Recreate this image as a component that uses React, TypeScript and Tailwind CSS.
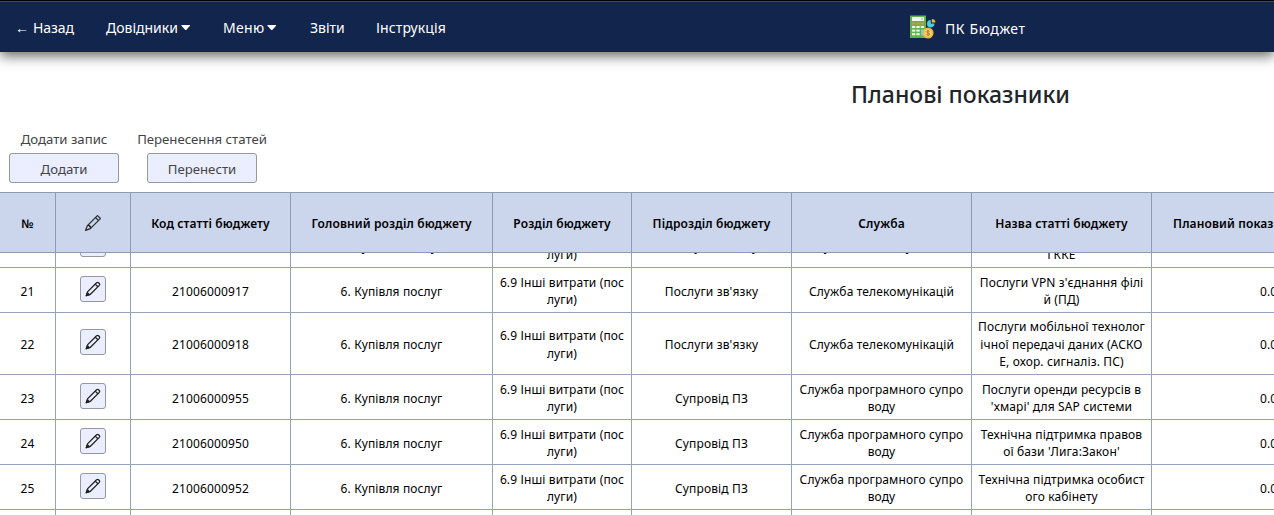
import type { ReactNode } from "react";

const COLS = "grid w-[1352px] shrink-0 grid-cols-[56px_75px_160px_202px_139px_160px_180px_180px_200px]";

function OutlinePencil() {
  return (
    <svg viewBox="0 0 16 16" className="size-4 text-[#222]" fill="currentColor" stroke="currentColor" strokeWidth="0.2" aria-hidden="true">
      <path d="M12.146.146a.5.5 0 0 1 .708 0l3 3a.5.5 0 0 1 0 .708l-10 10a.5.5 0 0 1-.168.11l-5 2a.5.5 0 0 1-.65-.65l2-5a.5.5 0 0 1 .11-.168zM11.207 2.5 13.5 4.793 14.793 3.5 12.5 1.207zm1.586 3L10.5 3.207 4 9.707V10h.5a.5.5 0 0 1 .5.5v.5h.5a.5.5 0 0 1 .5.5v.5h.293zm-9.761 5.175-.106.106-1.528 3.821 3.821-1.528.106-.106A.5.5 0 0 1 5 12.5V12h-.5a.5.5 0 0 1-.5-.5V11h-.5a.5.5 0 0 1-.468-.325" />
    </svg>
  );
}

function BoldPencil() {
  return (
    <svg viewBox="0 0 16 16" className="size-4 text-[#222]" fill="none" stroke="currentColor" strokeWidth="1.3" strokeLinejoin="round" aria-hidden="true">
      <path d="M1.300 14.700 2.700 10.600 11.600 1.700Q12.600.9 13.500 1.700L14.300 2.500Q15.100 3.400 14.300 4.400L5.400 13.300Z" />
      <path d="M10.200 3.100 12.900 5.800" />
      <path d="M1.300 14.700 2.400 11.600 4.400 13.600Z" fill="currentColor" />
    </svg>
  );
}

function Logo() {
  return (
    <svg viewBox="0 0 26 24" className="mb-px ml-px h-6 w-[26px]" aria-hidden="true">
      <rect x="0" y="0.5" width="16" height="22.5" rx="0.6" fill="#65b346" />
      <rect x="2" y="2" width="12" height="4" fill="#f4f8f4" />
      <rect x="11.5" y="2.5" width="1" height="2.6" fill="#9aa79f" />
      <g fill="#d98f6c">
        <rect x="2" y="7.6" width="3.3" height="2" />
        <rect x="6.4" y="7.6" width="3.3" height="2" />
        <rect x="10.8" y="7.6" width="3.3" height="2" />
      </g>
      <g fill="#eef7ea">
        <rect x="2" y="11" width="3.3" height="2" />
        <rect x="6.4" y="11" width="3.3" height="2" />
        <rect x="10.8" y="11" width="3.3" height="2" />
        <rect x="2" y="14.6" width="3.3" height="2" />
        <rect x="6.4" y="14.6" width="3.3" height="2" />
        <rect x="2" y="18.2" width="3.3" height="2" />
        <rect x="6.4" y="18.2" width="3.3" height="2" />
      </g>
      <rect x="11" y="14.5" width="5" height="6" fill="#62d4e6" />
      <path d="M20.800 5v3.600h3.600a3.700 3.700 0 1 1-3.600-3.600z" fill="#48cfe0" />
      <path d="M21.800 4a3.600 3.600 0 0 1 3.600 3.600H21.800z" fill="#f5b731" />
      <circle cx="18" cy="18" r="5.6" fill="#f3b53c" />
      <circle cx="18" cy="18" r="3.8" fill="#f9cf6b" />
      <path d="M19.600 16.400c-.6-.8-3-.8-3 .5s3 .8 3 2.200-2.500 1.300-3.100.4M18 15v6" fill="none" stroke="#a07c38" strokeWidth="0.9" />
    </svg>
  );
}

function Caret() {
  return (
    <svg viewBox="0 0 10 6" className="mb-px ml-[3px] h-[5.500px] w-[9.500px]" aria-hidden="true">
      <path d="M0.500 0h9q.5.2.2.7L5.500 5.500q-.5.500-1 0L.3.7Q0 .2.5 0z" fill="#fff" />
    </svg>
  );
}

function HeadCell({ children }: { children: ReactNode }) {
  return (
    <div className="flex items-center justify-center border-r border-b border-[#8d9ab3] pt-0.5 text-center whitespace-nowrap">
      {children}
    </div>
  );
}

function Cell({ children, single = false }: { children: ReactNode; single?: boolean }) {
  return (
    <div
      className={`flex items-center justify-center border-r border-b border-[#94a3b8] text-center whitespace-pre ${
        single ? "pt-1" : "pt-0.5"
      }`}
    >
      <div>{children}</div>
    </div>
  );
}

type Row = { n: string; code: string; sub: string; service: string; name: string; tall?: boolean };

const TEL = "Служба телекомунікацій";
const PROG = "Служба програмного супро\nводу";

const rows: Row[] = [
  { n: "20", code: "21006000916", sub: "Послуги зв'язку", service: TEL, name: "Послуги зв'язку\nГККЕ" },
  { n: "21", code: "21006000917", sub: "Послуги зв'язку", service: TEL, name: "Послуги VPN з'єднання філі\nй (ПД)" },
  {
    n: "22",
    code: "21006000918",
    sub: "Послуги зв'язку",
    service: TEL,
    name: "Послуги мобільної технолог\nічної передачі даних (АСКО\nЕ, охор. сигналіз. ПС)",
    tall: true,
  },
  { n: "23", code: "21006000955", sub: "Супровід ПЗ", service: PROG, name: "Послуги оренди ресурсів в\n'хмарі' для SAP системи" },
  { n: "24", code: "21006000950", sub: "Супровід ПЗ", service: PROG, name: "Технічна підтримка правов\nої бази 'Лига:Закон'" },
  { n: "25", code: "21006000952", sub: "Супровід ПЗ", service: PROG, name: "Технічна підтримка особист\nого кабінету" },
];

function TableRow({ row }: { row: Row }) {
  const single = !row.tall;
  return (
    <div className={`${COLS} ${row.tall ? "h-[62px]" : "h-[45px]"}`}>
      <Cell single={single}>{row.n}</Cell>
      <Cell>
        <button
          className={`flex size-[26px] items-center justify-center rounded-[3px] border border-[#96979f] bg-[#ebeeff] ${
            row.tall ? "mb-1.5" : "mb-1"
          }`}
        >
          <BoldPencil />
        </button>
      </Cell>
      <Cell single={single}>{row.code}</Cell>
      <Cell single={single}>6. Купівля послуг</Cell>
      <Cell>{"6.9 Інші витрати (пос\nлуги)"}</Cell>
      <Cell single={single}>{row.sub}</Cell>
      <Cell single={single && row.service === TEL}>{row.service}</Cell>
      <Cell>{row.name}</Cell>
      <div className={`flex items-center border-b border-[#94a3b8] pl-[108px] ${single ? "pt-1" : "pt-0.5"}`}>0.00</div>
    </div>
  );
}

function Action({ label, button }: { label: string; button: string }) {
  return (
    <div className="flex w-[138px] flex-col items-center">
      <span className="h-[23px] leading-[18px] whitespace-nowrap">{label}</span>
      <button className="h-[30px] w-[110px] rounded-[3px] border border-[#96979f] bg-[#ebeeff] pt-1">{button}</button>
    </div>
  );
}

export default function App() {
  return (
    <div className="flex h-[515px] w-[1274px] flex-col overflow-hidden bg-white font-['Noto_Sans','Open_Sans',sans-serif] text-black">
      <div className="h-px shrink-0 bg-black" />
      <header className="flex h-[51px] shrink-0 items-center border-t border-[#484848] bg-[#12254d] text-sm text-white shadow-[0_4px_12px_rgba(0,0,0,0.6)]">
        <nav className="flex w-[909px] items-center pt-0.5 pl-4">
          <span className="w-[90px] tracking-[-0.05px]">
            <span className="-ml-px inline-block w-[18px]">←</span>Назад
          </span>
          <span className="flex w-[117px] items-center">Довідники<Caret /></span>
          <span className="flex w-[87px] items-center tracking-[0.3px]">Меню<Caret /></span>
          <span className="w-[66px]">Звіти</span>
          <span className="tracking-[0.1px]">Інструкція</span>
        </nav>
        <Logo />
        <span className="pt-[3px] pl-[9px] tracking-[0.6px]">ПК Бюджет</span>
      </header>
      <h1 className="mt-[26px] ml-[851px] h-8 shrink-0 text-[23px] leading-8 font-medium text-[#212529]">Планові показники</h1>
      <div className="mt-5 -ml-[5px] flex h-[62px] shrink-0 text-[13.200px] text-[#444]">
        <Action label="Додати запис" button="Додати" />
        <Action label="Перенесення статей" button="Перенести" />
      </div>
      <div className={`${COLS} h-[61px] border-t border-[#8d9ab3] bg-[#cbd5eb] text-xs font-semibold tracking-[0.12px]`}>
        <HeadCell>№</HeadCell>
        <HeadCell><div className="mb-0.5"><OutlinePencil /></div></HeadCell>
        <HeadCell>Код статті бюджету</HeadCell>
        <HeadCell>Головний розділ бюджету</HeadCell>
        <HeadCell>Розділ бюджету</HeadCell>
        <HeadCell>Підрозділ бюджету</HeadCell>
        <HeadCell>Служба</HeadCell>
        <HeadCell>Назва статті бюджету</HeadCell>
        <div className="flex items-center border-b border-[#8d9ab3] pt-0.5 pl-[21px] whitespace-nowrap">Плановий показник</div>
      </div>
      <div className="flex min-h-0 flex-1 flex-col overflow-hidden text-xs leading-[17.500px] tracking-[0.13px]">
        <div className="-mt-[30px] flex flex-col">
          {rows.map((r) => (
            <TableRow key={r.n} row={r} />
          ))}
          <div className={`${COLS} h-[45px]`}>
            <Cell>{null}</Cell>
            <Cell>{null}</Cell>
            <Cell>{null}</Cell>
            <Cell>{null}</Cell>
            <Cell>{null}</Cell>
            <Cell>{null}</Cell>
            <Cell>{null}</Cell>
            <Cell>{null}</Cell>
          </div>
        </div>
      </div>
    </div>
  );
}
